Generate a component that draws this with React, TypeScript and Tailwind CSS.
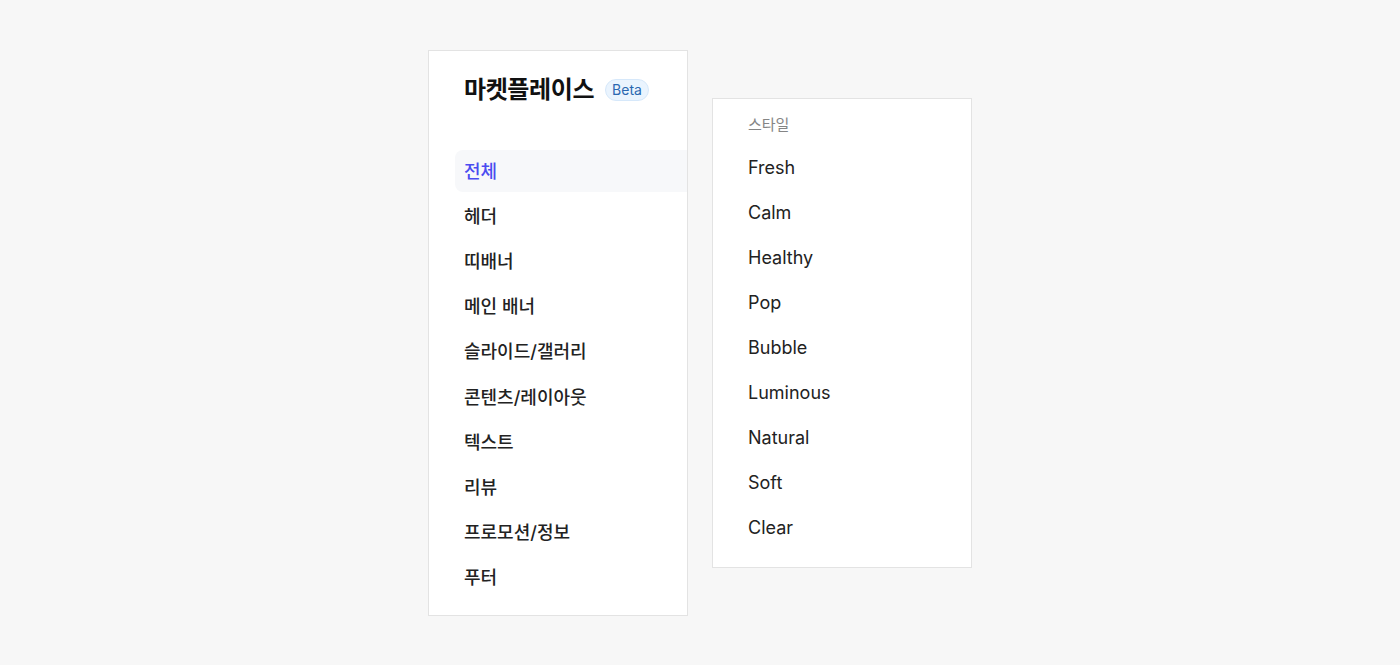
const categories = [
  "전체",
  "헤더",
  "띠배너",
  "메인 배너",
  "슬라이드/갤러리",
  "콘텐츠/레이아웃",
  "텍스트",
  "리뷰",
  "프로모션/정보",
  "푸터",
];

const styles = ["Fresh", "Calm", "Healthy", "Pop", "Bubble", "Luminous", "Natural", "Soft", "Clear"];

export default function App() {
  return (
    <div
      className="flex h-screen w-full items-center justify-center gap-6 bg-[#f7f7f7]"
      style={{ fontFamily: 'Inter, "Noto Sans CJK KR", sans-serif' }}
    >
      <aside className="mt-[1px] flex w-[260px] flex-col border border-[#e3e3e3] bg-white pb-[16px] pl-[26px] pt-[24px]">
        <div className="mb-[45px] flex h-[30px] items-center pl-[9px]">
          <h1 className="text-[24px] font-bold tracking-[-0.4px] text-[#111]">마켓플레이스</h1>
          <span className="ml-[11px] rounded-full border border-[#d6e8fa] bg-[#eaf4fe] px-[6px] text-[14px] leading-[20px] text-[#2c68b0]">
            Beta
          </span>
        </div>
        <nav className="flex flex-col gap-[3.2px]">
          {categories.map((c, i) => (
            <div
              key={c}
              className={
                i === 0
                  ? "flex h-[42px] items-center rounded-l-lg bg-[#f7f8fa] pl-[9px] text-[18px] font-medium text-[#4b4cf0]"
                  : "flex h-[42px] items-center pl-[9px] text-[18px] font-medium text-[#222]"
              }
            >
              {c}
            </div>
          ))}
        </nav>
      </aside>

      <section className="flex w-[260px] flex-col border border-[#e3e3e3] bg-white pb-[17px] pl-[35px] pt-[6px]">
        <div className="flex h-[40px] items-center pt-[1px] text-[15px] text-[#858585]">스타일</div>
        {styles.map((s) => (
          <div key={s} className="flex h-[45px] items-center text-[18px] text-[#222]">
            {s}
          </div>
        ))}
      </section>
    </div>
  );
}
